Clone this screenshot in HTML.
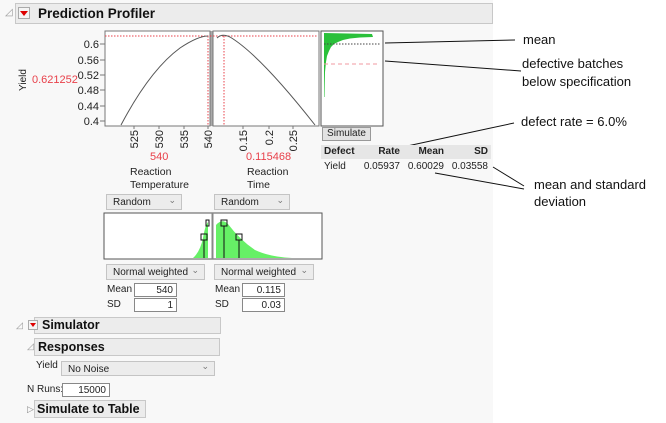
<!DOCTYPE html>
<html><head><meta charset="utf-8"><style>
body{margin:0;width:666px;height:423px;background:#fff;font-family:"Liberation Sans",sans-serif;position:relative;overflow:hidden;font-size:11px;color:#222}
.a{position:absolute;white-space:nowrap}
.hdr{position:absolute;background:#ececec;border:1px solid #c8c8c8;font-weight:bold;font-size:13px;color:#111;box-sizing:border-box;padding-left:4px;line-height:15px}
.dd{position:absolute;background:#ececec;border:1px solid #c4c4c4;box-sizing:border-box;font-size:10px;padding-left:6px;padding-top:1px}
.dd:after{content:"⌄";position:absolute;right:5px;top:-2px;font-size:9px;color:#777}
.tb{position:absolute;background:#fff;border:1px solid #888;box-sizing:border-box;font-size:10px;text-align:right;padding-right:3px;line-height:13px}
.red{color:#e8404a}
.ann{position:absolute;font-size:13px;color:#111;white-space:nowrap}
</style></head><body>
<div class="a" style="left:0;top:0;width:493px;height:423px;background:#f8f8f8"></div>
<div class="a" style="left:5px;top:7px;color:#999;font-size:10px">◿</div>
<div class="hdr" style="left:15px;top:3px;width:478px;height:21px;padding-left:22px;font-size:13.5px;line-height:19px">Prediction Profiler</div>
<div class="a" style="left:18px;top:7px;width:12px;height:12px;border:1px solid #aaa;background:#f4f4f4;box-sizing:border-box"></div>
<div class="a" style="left:20px;top:11px;width:0;height:0;border-left:4px solid transparent;border-right:4px solid transparent;border-top:5px solid #d00"></div>

<svg class="a" style="left:0;top:0" width="666" height="423">
<rect x="105" y="31" width="105" height="95" fill="#fff" stroke="#777"/>
<rect x="213" y="31" width="106" height="95" fill="#fff" stroke="#777"/>
<line x1="211.5" y1="31" x2="211.5" y2="126" stroke="#aaa" stroke-width="2"/>
<line x1="105" y1="36" x2="318" y2="36" stroke="#e8404a" stroke-dasharray="1.5,1.5"/>
<line x1="208" y1="36" x2="208" y2="126" stroke="#e8404a" stroke-dasharray="1.5,1.5"/>
<line x1="224" y1="36" x2="224" y2="126" stroke="#e8404a" stroke-dasharray="1.5,1.5"/>
<path d="M121,125 Q150,70 180,48 Q198,36 208,36" fill="none" stroke="#555"/>
<path d="M217,38 Q222,33 230,37 Q260,55 315,125" fill="none" stroke="#555"/>
<g stroke="#777"><line x1="100" y1="44" x2="105" y2="44"/><line x1="100" y1="60" x2="105" y2="60"/><line x1="100" y1="75" x2="105" y2="75"/><line x1="100" y1="90" x2="105" y2="90"/><line x1="100" y1="106" x2="105" y2="106"/><line x1="100" y1="121" x2="105" y2="121"/>
<line x1="134" y1="126" x2="134" y2="129"/><line x1="159" y1="126" x2="159" y2="129"/><line x1="184" y1="126" x2="184" y2="129"/><line x1="208" y1="126" x2="208" y2="129"/><line x1="243" y1="126" x2="243" y2="129"/><line x1="269" y1="126" x2="269" y2="129"/><line x1="293" y1="126" x2="293" y2="129"/></g>
<g font-family="Liberation Sans" font-size="11" fill="#222" text-anchor="end">
<text x="99" y="48">0.6</text><text x="99" y="64">0.56</text><text x="99" y="79">0.52</text><text x="99" y="94">0.48</text><text x="99" y="110">0.44</text><text x="99" y="125">0.4</text>
<text transform="translate(138,130) rotate(-90)">525</text><text transform="translate(163,130) rotate(-90)">530</text><text transform="translate(188,130) rotate(-90)">535</text><text transform="translate(212,130) rotate(-90)">540</text>
<text transform="translate(247,130) rotate(-90)">0.15</text><text transform="translate(273,130) rotate(-90)">0.2</text><text transform="translate(297,130) rotate(-90)">0.25</text>
</g>
<text transform="translate(26,80) rotate(-90)" font-family="Liberation Sans" font-size="10" fill="#222" text-anchor="middle">Yield</text>
<rect x="321" y="31" width="62" height="95" fill="#fff" stroke="#555"/>
<path d="M324,33 L372,34 L373,37 L360,37.5 L350,38.5 L343,40 L338,42 L334,44 L331,47 L329,51 L327,56 L326,62 L325,72 L324.7,85 L324.5,97 L324,97 Z" fill="#2ac03a"/>
<line x1="324" y1="44" x2="380" y2="44" stroke="#444" stroke-dasharray="1.5,1.5"/>
<line x1="324" y1="64" x2="380" y2="64" stroke="#f09aa0" stroke-dasharray="4,3"/>
<g stroke="#111" stroke-width="1"><line x1="385" y1="43" x2="515" y2="40"/><line x1="385" y1="61" x2="521" y2="71"/><line x1="398" y1="148" x2="514" y2="123"/><line x1="493" y1="167" x2="524" y2="186"/><line x1="435" y1="173" x2="524" y2="189"/></g>
<rect x="104" y="213" width="218" height="46" fill="#fff" stroke="#555"/>
<line x1="212.5" y1="213" x2="212.5" y2="259" stroke="#888" stroke-width="2"/>
<path d="M193,258 Q200,252 203,238 Q205,226 208,222 L208,258 Z" fill="#66f066"/>
<path d="M216,258 L216,225 Q222,218 228,224 Q240,240 255,250 Q270,257 292,258 Z" fill="#66f066"/>
<g stroke="#111" fill="none"><line x1="204" y1="240" x2="204" y2="258"/><rect x="201" y="234" width="6" height="6"/><rect x="206" y="220" width="3" height="6"/>
<line x1="224" y1="226" x2="224" y2="258"/><rect x="221" y="220" width="6" height="6"/><line x1="239" y1="240" x2="239" y2="258"/><rect x="236" y="234" width="6" height="6"/></g>
</svg>

<div class="a red" style="left:32px;top:74px;font-size:11px">0.621252</div>
<div class="a red" style="left:150px;top:151px;font-size:11px">540</div>
<div class="a red" style="left:246px;top:151px;font-size:11px">0.115468</div>
<div class="a" style="left:130px;top:166px;font-size:10.5px;line-height:13px">Reaction<br>Temperature</div>
<div class="a" style="left:247px;top:166px;font-size:10.5px;line-height:13px">Reaction<br>Time</div>

<div class="a" style="left:322px;top:127px;width:49px;height:14px;background:#e2e2e2;border:1px solid #999;box-sizing:border-box;font-size:10px;text-align:center;line-height:12px">Simulate</div>
<div class="a" style="left:321px;top:145px;width:170px;height:14px;background:#e6e6e6"></div>
<div class="a" style="left:324px;top:146px;font-weight:bold;font-size:10px">Defect</div>
<div class="a" style="left:364px;top:146px;width:36px;text-align:right;font-weight:bold;font-size:10px">Rate</div>
<div class="a" style="left:404px;top:146px;width:40px;text-align:right;font-weight:bold;font-size:10px">Mean</div>
<div class="a" style="left:450px;top:146px;width:38px;text-align:right;font-weight:bold;font-size:10px">SD</div>
<div class="a" style="left:324px;top:161px;font-size:10px">Yield</div>
<div class="a" style="left:360px;top:161px;width:40px;text-align:right;font-size:10px">0.05937</div>
<div class="a" style="left:404px;top:161px;width:40px;text-align:right;font-size:10px">0.60029</div>
<div class="a" style="left:448px;top:161px;width:40px;text-align:right;font-size:10px">0.03558</div>

<div class="ann" style="left:523px;top:32px">mean</div>
<div class="ann" style="left:522px;top:56px">defective batches</div>
<div class="ann" style="left:522px;top:74px">below specification</div>
<div class="ann" style="left:521px;top:114px">defect rate = 6.0%</div>
<div class="ann" style="left:534px;top:177px">mean and standard</div>
<div class="ann" style="left:534px;top:194px">deviation</div>

<div class="dd" style="left:106px;top:194px;width:76px;height:16px;line-height:14px">Random</div>
<div class="dd" style="left:214px;top:194px;width:76px;height:16px;line-height:14px">Random</div>
<div class="dd" style="left:106px;top:264px;width:99px;height:16px;line-height:14px">Normal weighted</div>
<div class="dd" style="left:214px;top:264px;width:100px;height:16px;line-height:14px">Normal weighted</div>
<div class="a" style="left:107px;top:284px;font-size:10px">Mean</div>
<div class="a" style="left:107px;top:299px;font-size:10px">SD</div>
<div class="tb" style="left:134px;top:283px;width:43px;height:14px">540</div>
<div class="tb" style="left:134px;top:298px;width:43px;height:14px">1</div>
<div class="a" style="left:215px;top:284px;font-size:10px">Mean</div>
<div class="a" style="left:215px;top:299px;font-size:10px">SD</div>
<div class="tb" style="left:242px;top:283px;width:43px;height:14px">0.115</div>
<div class="tb" style="left:242px;top:298px;width:43px;height:14px">0.03</div>

<div class="a" style="left:16px;top:320px;color:#999;font-size:9px">◿</div>
<div class="hdr" style="left:34px;top:317px;width:187px;height:17px;padding-left:7px;font-size:12.5px;line-height:15px">Simulator</div>
<div class="a" style="left:28px;top:320px;width:10px;height:10px;border:1px solid #aaa;background:#f4f4f4;box-sizing:border-box"></div>
<div class="a" style="left:29.5px;top:323px;width:0;height:0;border-left:3.5px solid transparent;border-right:3.5px solid transparent;border-top:4px solid #d00"></div>
<div class="a" style="left:27px;top:341px;color:#999;font-size:9px">◿</div>
<div class="hdr" style="left:34px;top:338px;width:186px;height:18px;padding-left:3px;font-size:12.5px;line-height:16px">Responses</div>
<div class="a" style="left:36px;top:360px;font-size:10px">Yield</div>
<div class="dd" style="left:61px;top:361px;width:154px;height:15px;line-height:13px">No Noise</div>
<div class="a" style="left:27px;top:384px;font-size:10px">N Runs:</div>
<div class="tb" style="left:62px;top:383px;width:48px;height:14px">15000</div>
<div class="a" style="left:27px;top:404px;color:#888;font-size:9px">▷</div>
<div class="hdr" style="left:34px;top:400px;width:112px;height:18px;padding-left:2px;font-size:12.5px;line-height:16px">Simulate to Table</div>
</body></html>
